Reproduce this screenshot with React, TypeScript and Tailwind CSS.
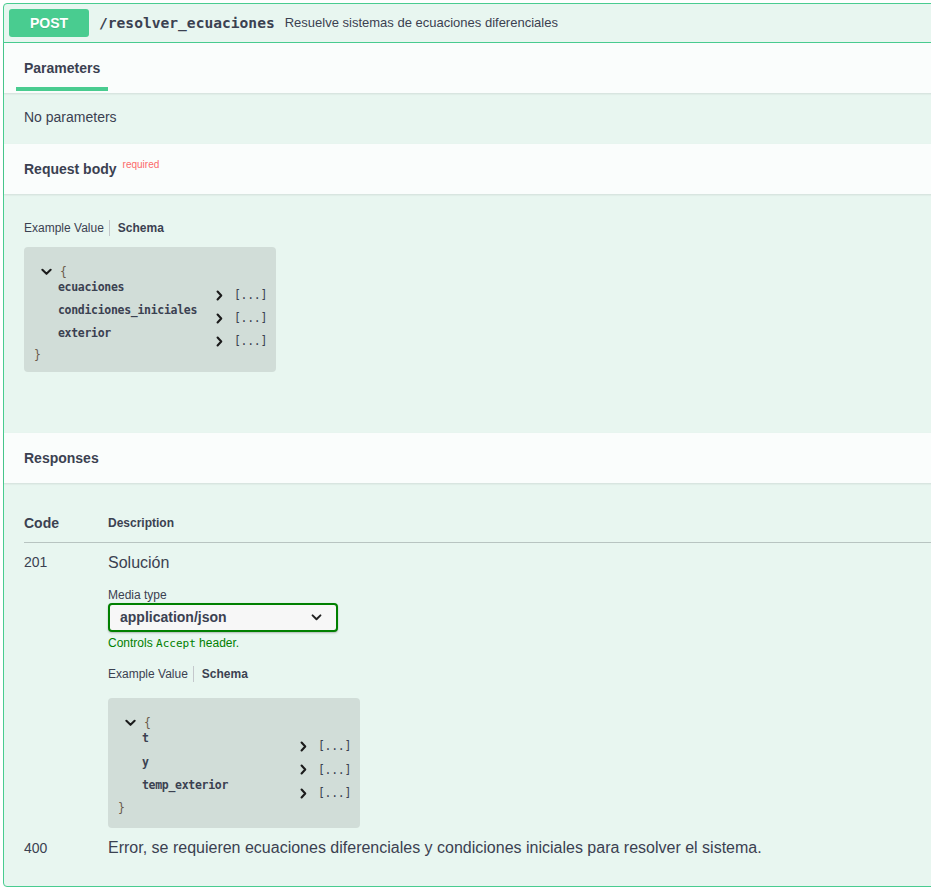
import React from 'react';

const mono = "font-['DejaVu_Sans_Mono','Liberation_Mono',monospace]";

function ChevronDown({ className = '' }: { className?: string }) {
  return (
    <svg viewBox="0 0 12 8" className={className} fill="none" stroke="currentColor" strokeWidth="2.2" strokeLinecap="round" strokeLinejoin="round">
      <path d="M1.5 1.5 L6 6 L10.5 1.5" />
    </svg>
  );
}

function ChevronRight({ className = '' }: { className?: string }) {
  return (
    <svg viewBox="0 0 8 12" className={className} fill="none" stroke="currentColor" strokeWidth="2.4" strokeLinecap="round" strokeLinejoin="round">
      <path d="M1.8 1.5 L6 6 L1.8 10.5" />
    </svg>
  );
}

function TabsLine() {
  return (
    <div className="flex items-center h-[14px] text-[12px] leading-[14px]">
      <span className="pr-[5px]">Example Value</span>
      <span className="h-[16px] w-px bg-[#c4c8cc]" />
      <span className="pl-[8px] font-bold">Schema</span>
    </div>
  );
}

function ModelBox({ props, tall = false }: { props: string[]; tall?: boolean }) {
  return (
    <div className={`w-[252px] rounded-[4px] bg-[#d1ddd8] pl-[10px] pt-[18px] ${tall ? 'pb-[13px]' : 'pb-[10px]'} ${mono} text-[11.5px]`}>
      <div className="flex items-center h-[14px] leading-[14px] pl-[7px]">
        <ChevronDown className="w-[11px] h-[8px] text-[#1b1b1b]" />
        <span className="ml-[8px] text-[#6b5a4a]">{'{'}</span>
      </div>
      {props.map((p) => (
        <div key={p} className={`flex ${tall ? 'h-[23.5px]' : 'h-[23px]'} pl-[24px]`}>
          <span className="w-[158px] leading-[14px] font-semibold text-[#3b4151] pt-px tracking-[-0.3px]">{p}</span>
          <span className="flex items-center h-[14px] mt-[9px] leading-[14px]">
            <ChevronRight className="w-[7px] h-[11px] text-[#1b1b1b]" />
            <span className="ml-[11px] text-[#3b4151] tracking-[-0.3px]">[...]</span>
          </span>
        </div>
      ))}
      <div className="h-[14px] leading-[14px] text-[#6b5a4a]">{'}'}</div>
    </div>
  );
}

function SectionHeader({ children }: { children: React.ReactNode }) {
  return (
    <div className="h-[50px] flex items-center px-[20px] bg-[#fafdfc] shadow-[0_1px_2px_rgba(0,0,0,0.1)] relative">
      {children}
    </div>
  );
}

export default function App() {
  return (
    <div className="w-[931px] h-[894px] overflow-hidden bg-white pl-[3px] pt-[3px] font-['Liberation_Sans',Arial,sans-serif] text-[#3b4151]">
      <div className="w-[960px] border border-[#49cc90] rounded-[4px] bg-[#e8f6f0]">
        {/* summary */}
        <div className="flex items-center p-[5px] border-b border-[#49cc90]">
          <span className="w-[80px] h-[28px] flex items-center justify-center rounded-[3px] bg-[#49cc90] text-white font-bold text-[14px] [text-shadow:0_1px_0_rgba(0,0,0,0.1)]">
            POST
          </span>
          <span className={`ml-[10px] ${mono} font-bold text-[14.6px] text-[#3b4151]`}>/resolver_ecuaciones</span>
          <span className="ml-[10px] text-[13px] text-[#3b4151]">Resuelve sistemas de ecuaciones diferenciales</span>
        </div>

        {/* parameters tab */}
        <SectionHeader>
          <span className="relative text-[14px] font-bold leading-[16px]">
            Parameters
            <span className="absolute left-[-10%] w-[120%] -bottom-[15px] h-[4px] bg-[#49cc90]" />
          </span>
        </SectionHeader>
        <div className="h-[51px] flex items-center px-[20px] pb-[3px] text-[14px]">No parameters</div>

        {/* request body */}
        <SectionHeader>
          <span className="text-[14px] font-bold leading-[16px]">Request body</span>
          <span className="ml-[6px] -mt-[10px] text-[10px] text-[#fa6a6a]">required</span>
        </SectionHeader>
        <div className="px-[20px] pt-[27px] pb-[61px]">
          <TabsLine />
          <div className="mt-[12px]">
            <ModelBox props={['ecuaciones', 'condiciones_iniciales', 'exterior']} />
          </div>
        </div>

        {/* responses */}
        <SectionHeader>
          <span className="text-[14px] font-bold leading-[16px]">Responses</span>
        </SectionHeader>
        <div className="px-[20px] pt-[20px] pb-[19px]">
          <div className="flex items-center h-[40px] pt-px border-b border-[#b8c4c1]">
            <span className="w-[84px] text-[14px] font-bold">Code</span>
            <span className="text-[12px] font-bold">Description</span>
          </div>

          <div className="flex pt-[11px]">
            <span className="w-[84px] text-[14px] leading-[16px]">201</span>
            <div className="flex flex-col">
              <span className="text-[16px] leading-[18px]">Solución</span>
              <span className="mt-[16px] text-[12px] leading-[14px]">Media type</span>
              <div className="mt-[1px] w-[230px] h-[29px] flex items-center justify-between pl-[10px] pr-[14px] rounded-[4px] border-2 border-[#008000] bg-[#f7f7f7] shadow-[0_1px_2px_rgba(0,0,0,0.25)]">
                <span className="text-[14px] font-bold text-[#3b4151]">application/json</span>
                <ChevronDown className="w-[11px] h-[7px] text-[#222]" />
              </div>
              <span className="mt-[4px] text-[12px] leading-[14px] text-[#008000]">
                Controls <span className={`${mono} text-[11px]`}>Accept</span> header.
              </span>
              <div className="mt-[16px]">
                <TabsLine />
              </div>
              <div className="mt-[17px]">
                <ModelBox props={['t', 'y', 'temp_exterior']} tall />
              </div>
            </div>
          </div>

          <div className="flex pt-[11px] pb-[10px]">
            <span className="w-[84px] text-[14px] leading-[18px]">400</span>
            <span className="text-[16px] leading-[18px]">
              Error, se requieren ecuaciones diferenciales y condiciones iniciales para resolver el sistema.
            </span>
          </div>
        </div>
      </div>
    </div>
  );
}
